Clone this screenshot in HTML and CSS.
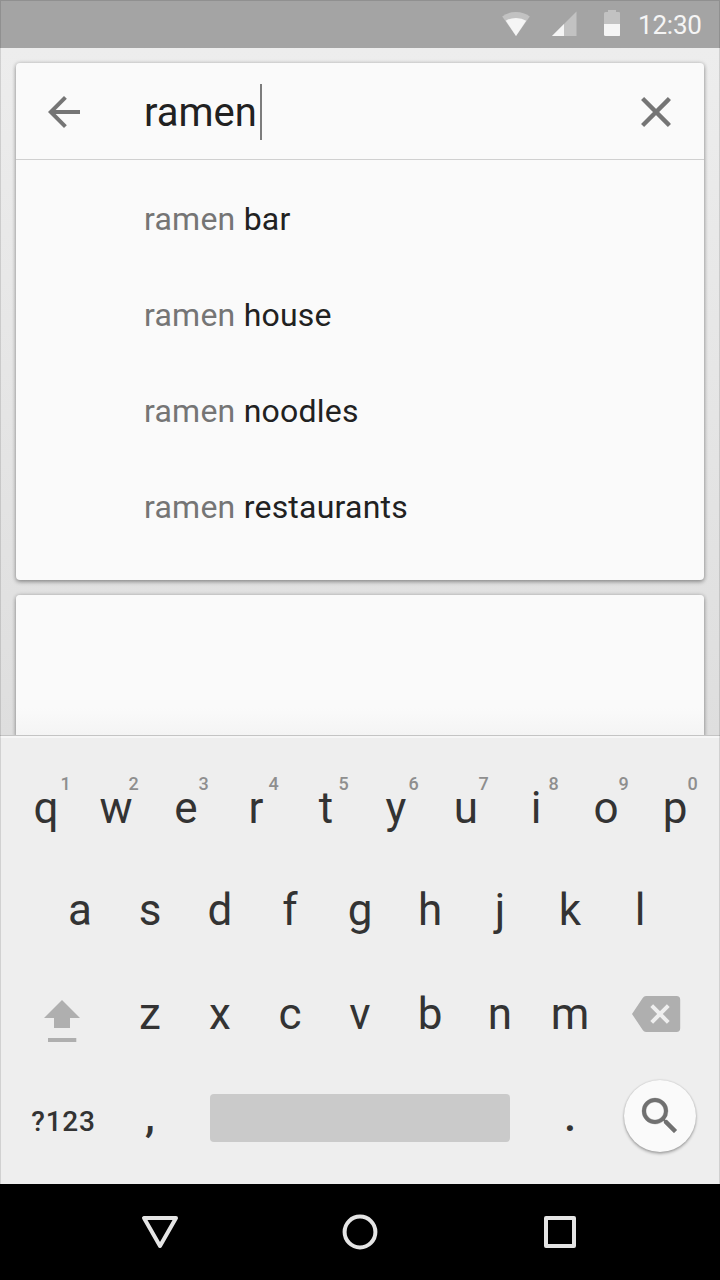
FILE: index.html
```html
<!DOCTYPE html>
<html lang="en">
<head>
<meta charset="utf-8">
<title>Search</title>
<link rel="stylesheet" href="styles.css">
</head>
<body>
<div class="phone">
  <div class="screen">
    <header class="status">
      <svg class="status-icons" width="120" height="48" viewBox="500 0 120 48">
        <path fill="#c2c2c2" d="M516 36 502.200 16.500Q508 12 516 12T529.800 16.500Z"/>
        <path fill="#f5f5f5" d="M516 36 505.800 20.800Q510 18 516 18T526.200 20.800Z"/>
        <path fill="#c2c2c2" d="M552 36 576.500 11.500V36Z"/>
        <path fill="#f5f5f5" d="M552 36 564 24V36Z"/>
        <path fill="#c2c2c2" d="M604 24V13.500q0-1.500 1.500-1.500H608V10h8v2h2.700q1.500 0 1.500 1.500V24Z"/>
        <path fill="#f5f5f5" d="M604 24h16.200v10.500q0 1.500-1.500 1.500h-13.200q-1.500 0-1.500-1.500Z"/>
      </svg>
      <span class="clock">12:30</span>
    </header>
    <main class="content">
      <section class="card search">
        <div class="search-bar">
          <svg class="back" width="48" height="48" viewBox="0 0 24 24"><path d="M20 11H7.830l5.590-5.590L12 4l-8 8 8 8 1.410-1.410L7.830 13H20z"/></svg>
          <div class="query">ramen</div><div class="caret"></div>
          <svg class="clear" width="48" height="48" viewBox="0 0 24 24"><path d="M6 6 18 18M18 6 6 18"/></svg>
        </div>
        <ul class="suggestions">
          <li><span>ramen</span> bar</li>
          <li><span>ramen</span> house</li>
          <li><span>ramen</span> noodles</li>
          <li><span>ramen</span> restaurants</li>
        </ul>
      </section>
      <section class="card results"></section>
    </main>
    <section class="keyboard">
      <div class="row row-1">
        <div class="key">q<sup>1</sup></div><div class="key">w<sup>2</sup></div><div class="key">e<sup>3</sup></div><div class="key">r<sup>4</sup></div><div class="key">t<sup>5</sup></div><div class="key">y<sup>6</sup></div><div class="key">u<sup>7</sup></div><div class="key">i<sup>8</sup></div><div class="key">o<sup>9</sup></div><div class="key">p<sup>0</sup></div>
      </div>
      <div class="row row-2">
        <div class="key">a</div><div class="key">s</div><div class="key">d</div><div class="key">f</div><div class="key">g</div><div class="key">h</div><div class="key">j</div><div class="key">k</div><div class="key">l</div>
      </div>
      <div class="row row-3">
        <div class="key shift"><svg width="36" height="42" viewBox="0 0 36 42"><path d="M18 0 36 18H26V28H10V18H0ZM4 38H32.300V42H4Z"/></svg></div>
        <div class="key">z</div><div class="key">x</div><div class="key">c</div><div class="key">v</div><div class="key">b</div><div class="key">n</div><div class="key">m</div>
        <div class="key delete"><svg width="48" height="36" viewBox="0 0 48 36"><path d="M14 0H44.500Q48.200 0 48.200 3.700V32.300Q48.200 36 44.500 36H14Q12 36 10.700 34L0 18 10.700 2Q12 0 14 0Z"/><path class="cross" d="M19.700 9.700 36.300 26.300M36.300 9.700 19.700 26.300"/></svg></div>
      </div>
      <div class="row row-4">
        <div class="key symbols">?123</div>
        <div class="key comma">,</div>
        <div class="space"></div>
        <div class="key period">.</div>
        <div class="go"><svg width="48" height="48" viewBox="0 0 24 24"><path d="M15.500 14h-.790l-.280-.270A6.470 6.470 0 0 0 16 9.500 6.500 6.500 0 1 0 9.500 16c1.610 0 3.090-.590 4.230-1.570l.270.280v.790l5 4.990L20.490 19zm-6 0C7.010 14 5 11.990 5 9.500S7.010 5 9.500 5 14 7.010 14 9.500 11.990 14 9.500 14"/></svg></div>
      </div>
    </section>
  </div>
  <nav class="nav">
    <svg width="40" height="40" viewBox="0 0 40 40"><path d="M4 6H36L20 34Z"/></svg>
    <svg width="40" height="40" viewBox="0 0 40 40"><circle cx="20" cy="20" r="15.400"/></svg>
    <svg width="40" height="40" viewBox="0 0 40 40"><rect x="6" y="6" width="28" height="28"/></svg>
  </nav>
</div>
</body>
</html>
```

FILE: styles.css
```css
* { box-sizing: border-box; }
body { margin: 0; font-family: Roboto, sans-serif; color: #212121; }
svg { display: block; }

.phone { width: 720px; height: 1280px; overflow: hidden; }

.screen {
  position: relative;
  height: 1184px;
  display: flex;
  flex-direction: column;
}
/* hairline frame laid over the whole screen */
.screen::after {
  content: "";
  position: absolute;
  inset: 0;
  border: 1px solid rgba(0, 0, 0, 0.12);
  border-bottom: 0;
  pointer-events: none;
}

.status {
  height: 48px;
  flex: none;
  display: flex;
  align-items: center;
  justify-content: flex-end;
  padding-right: 18px;
  background: #a4a4a4;
}
.clock {
  width: 64px;
  margin-left: 18px;
  padding-top: 2px;
  font-size: 26px;
  line-height: 48px;
  letter-spacing: -0.2px;
  color: #f5f5f5;
  white-space: nowrap;
}

.content {
  height: 688px;
  flex: none;
  display: flex;
  flex-direction: column;
  gap: 15px;
  padding: 15px 16px 0;
  background: linear-gradient(#ededed, #dedede);
  overflow: hidden;
}
.card {
  background: #fafafa;
  border-radius: 4px;
  box-shadow: 0 0 4px rgba(0, 0, 0, 0.18), 0 2px 4px rgba(0, 0, 0, 0.32);
}
.search { height: 517px; flex: none; }
.results {
  height: 141px;
  flex: none;
  border-radius: 4px 4px 0 0;
  background: linear-gradient(#fafafa 80%, #f4f4f4);
}

.search-bar {
  height: 97px;
  display: flex;
  align-items: center;
  padding: 1px 24px 0;
  border-bottom: 1px solid #d0d0d0;
}
.search-bar svg { fill: #757575; }
.query {
  margin-left: 56px;
  padding-top: 2px;
  font-size: 40px;
  line-height: 48px;
}
.caret { width: 2px; height: 56px; margin-left: 3px; background: #7c7c7c; }
.search-bar .clear {
  margin-left: auto;
  fill: none;
  stroke: #757575;
  stroke-width: 2.2;
  stroke-linecap: square;
}
.clear path { transform: translate(0.12px, 0.12px) scale(0.99); }

.suggestions {
  list-style: none;
  margin: 0;
  padding: 11px 0 0 128px;
  font-size: 32px;
  letter-spacing: 0.23px;
}
.suggestions li { height: 96px; line-height: 96px; }
.suggestions span { color: #757575; }

.keyboard {
  position: relative;
  height: 448px;
  padding: 20px 10px 0;
  background: #eee;
  color: #333;
  box-shadow: 0 -1px 0 #c4c4c4, inset 0 2px 0 #f6f6f6;
}
.row { display: flex; justify-content: center; align-items: center; }
.row-1 { height: 104px; justify-content: flex-start; padding-left: 1px; }
.row-1 .key:last-child { margin-left: -1px; }
.row-2 { height: 100px; }
.row-3 { height: 108px; }
.row-4 { height: 100px; }
.key {
  position: relative;
  width: 70px;
  flex: none;
  text-align: center;
  font-size: 44px;
  line-height: 60px;
}
.key sup {
  position: absolute;
  left: 47.5px;
  top: -4px;
  font-size: 18px;
  font-weight: 500;
  line-height: 20px;
  color: #8e8e8e;
}
.key:first-child sup { left: 49.5px; }
.shift, .delete { width: 105px; display: flex; }
.shift { padding: 14px 0 0 34px; }
.delete { padding-left: 27px; }
.key svg { fill: #afafaf; overflow: visible; }
.key .cross { stroke: #eee; stroke-width: 4; }

.symbols {
  width: 105px;
  padding: 7px 0 0 2px;
  font-size: 28px;
  font-weight: 500;
  letter-spacing: 0.8px;
}
.comma, .period { margin-top: -4px; font-weight: 500; }
.space {
  width: 300px;
  height: 48px;
  margin: 0 25px;
  border-radius: 4px;
  background: #cacaca;
}
.row-4 { justify-content: flex-start; }
.go {
  width: 72px;
  height: 72px;
  margin: -4px 0 0 19px;
  padding: 12px;
  border-radius: 50%;
  background: #fafafa;
  box-shadow: 0 0 2px rgba(0, 0, 0, 0.2), 0 2px 3px rgba(0, 0, 0, 0.28);
}
.go svg { fill: #707070; stroke: #707070; stroke-width: 0.15; }

.nav {
  height: 96px;
  display: flex;
  justify-content: center;
  align-items: center;
  gap: 160px;
  background: #000;
}
.nav svg { fill: none; stroke: #e5e5e5; stroke-width: 4; stroke-linejoin: round; }
```
